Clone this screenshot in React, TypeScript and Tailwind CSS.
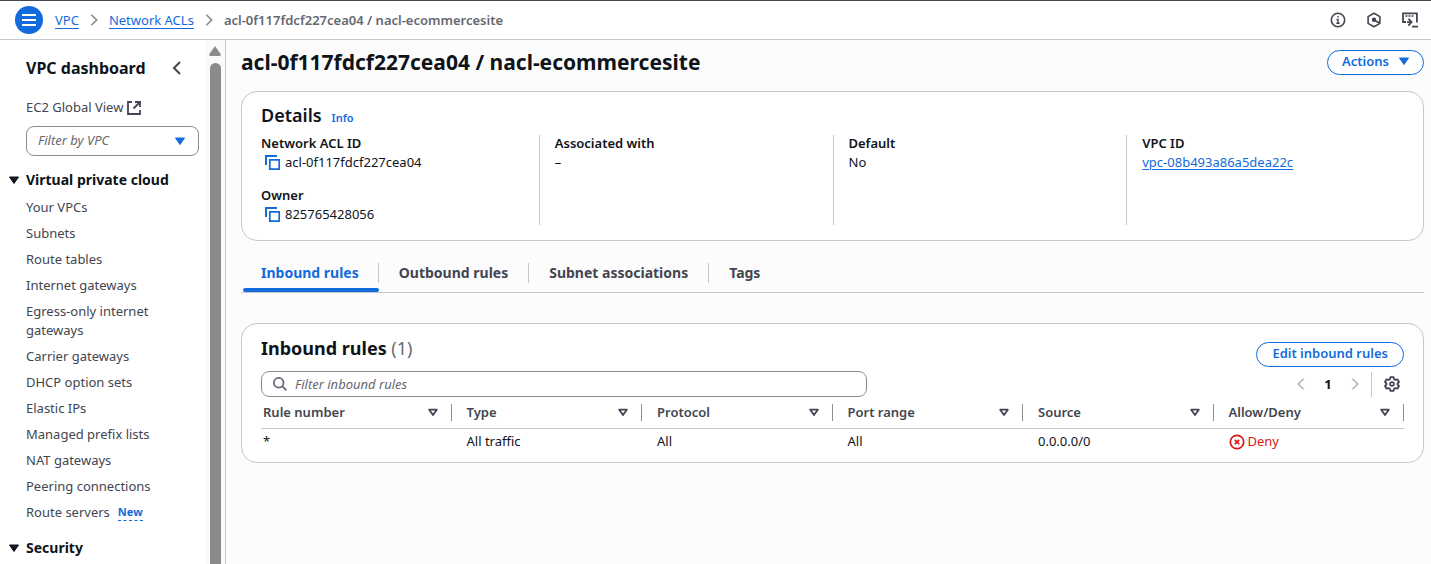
import React from "react";

const vpcLinks = [
  "Your VPCs",
  "Subnets",
  "Route tables",
  "Internet gateways",
  "Egress-only internet gateways",
  "Carrier gateways",
  "DHCP option sets",
  "Elastic IPs",
  "Managed prefix lists",
  "NAT gateways",
  "Peering connections",
];

const tabs = ["Inbound rules", "Outbound rules", "Subnet associations", "Tags"];

const columns = ["Rule number", "Type", "Protocol", "Port range", "Source", "Allow/Deny"];

function Chevron({ dir, className }: { dir: "left" | "right"; className: string }) {
  return (
    <svg viewBox="0 0 16 16" className={className} fill="none" stroke="currentColor" strokeWidth="2" aria-hidden="true">
      <path d={dir === "left" ? "M11 2 5 8l6 6" : "M5 2l6 6-6 6"} />
    </svg>
  );
}

function Caret({ className }: { className: string }) {
  return (
    <svg viewBox="0 0 10 8" className={className} fill="currentColor" stroke="currentColor" strokeLinejoin="round" aria-hidden="true">
      <path d="M.5 1h9L5 7.500z" />
    </svg>
  );
}

function CopyIcon() {
  return (
    <svg viewBox="0 0 16 16" className="size-4" fill="none" stroke="currentColor" aria-hidden="true">
      <path d="M1 10V1h11" strokeWidth="2" />
      <path d="M4.800 4.800h9.400v9.400H4.800z" strokeWidth="1.700" />
    </svg>
  );
}

function ExternalIcon() {
  return (
    <svg viewBox="0 0 16 16" className="size-4" fill="none" stroke="currentColor" strokeWidth="1.800" aria-hidden="true">
      <path d="M6 2H2v12h12v-4" />
      <path d="M9 2h5v5M14 2 7.500 8.500" />
    </svg>
  );
}

function InfoIcon() {
  return (
    <svg viewBox="0 0 16 16" className="size-4" fill="none" stroke="currentColor" aria-hidden="true">
      <circle cx="8" cy="8" r="6.700" strokeWidth="1.600" />
      <path d="M8 4v1.600M6.500 7.500H8v4M6.300 11.300h3.400" strokeWidth="1.400" />
    </svg>
  );
}

function HexIcon() {
  return (
    <svg viewBox="0 0 16 16" className="size-4" fill="none" stroke="currentColor" aria-hidden="true">
      <path d="M8 1.200 13.900 4.600v6.800L8 14.800 2.100 11.400V4.600z" strokeWidth="1.600" strokeLinejoin="round" />
      <path d="M8 8l5 2.800" strokeWidth="1.700" />
      <circle cx="8" cy="7.800" r="2.200" fill="currentColor" stroke="none" />
    </svg>
  );
}

function ShellIcon() {
  return (
    <svg viewBox="0 0 16 16" className="size-4" fill="none" stroke="currentColor" strokeWidth="1.800" aria-hidden="true">
      <path d="M4 10H1V1.400h13.900V10.500" />
      <path d="M3.500 4h2M6.500 4h2M9.500 4h2" strokeWidth="1.400" />
      <path d="M5 10.200h4M6.500 6.800 9.600 10l-3.300 3.600" />
      <path d="M10 14.600h6" />
    </svg>
  );
}

function GearIcon() {
  return (
    <svg viewBox="0 0 16 16" className="size-4" fill="none" stroke="currentColor" strokeWidth="1.800" strokeLinejoin="round" aria-hidden="true">
      <path d="M6.400 1.200h3.200l.5 2 1.300.7 2-.6 1.600 2.700-1.500 1.500v1l1.500 1.500-1.600 2.700-2-.6-1.300.7-.5 2H6.400l-.5-2-1.300-.7-2 .6L1 10l1.500-1.500v-1L1 6l1.600-2.700 2 .6 1.300-.7z" />
      <circle cx="8" cy="8" r="1.900" />
    </svg>
  );
}

function SectionHeading({ title }: { title: string }) {
  return (
    <button type="button" className="flex w-full items-center gap-[7px] pl-[9px] text-left text-[14px] leading-5 font-bold text-[#0f141a]">
      <Caret className="h-2 w-[10px]" />
      {title}
    </button>
  );
}

function Field({ label, children }: { label: string; children: React.ReactNode }) {
  return (
    <div>
      <dt className="font-semibold">{label}</dt>
      <dd>{children}</dd>
    </div>
  );
}

function Copyable({ value }: { value: string }) {
  return (
    <span className="flex items-center gap-1 pl-1">
      <button type="button" aria-label={`Copy ${value}`} className="text-[#126bdc]">
        <CopyIcon />
      </button>
      {value}
    </span>
  );
}

export default function App() {
  return (
    <div className="flex h-screen flex-col overflow-hidden border-t border-[#424650] bg-[#fcfcfd] font-['Noto_Sans',sans-serif] text-[13px] leading-[19px] text-[#0f141a]">
      <header className="flex h-[39px] shrink-0 items-center justify-between border-b border-[#c6c6cd] bg-white pr-[13px] pl-[15px]">
        <div className="flex items-center gap-3">
          <button type="button" aria-label="Open navigation" className="flex size-7 items-center justify-center rounded-full bg-[#126bdc] text-white">
            <svg viewBox="0 0 14 12" className="h-3 w-[14px]" stroke="currentColor" strokeWidth="2" aria-hidden="true">
              <path d="M0 1h14M0 6h14M0 11h14" />
            </svg>
          </button>
          <nav aria-label="Breadcrumb" className="flex items-center gap-2">
            <a href="#vpc" className="border-b border-[#126bdc] leading-4 text-[#126bdc]">VPC</a>
            <Chevron dir="right" className="size-[14px] text-[#8c8c94]" />
            <a href="#acls" className="border-b border-[#126bdc] leading-4 text-[#126bdc]">Network ACLs</a>
            <Chevron dir="right" className="size-[14px] text-[#8c8c94]" />
            <span className="font-semibold text-[#656871]">acl-0f117fdcf227cea04 / nacl-ecommercesite</span>
          </nav>
        </div>
        <div className="flex items-center gap-5 text-[#424650]">
          <button type="button" aria-label="Info"><InfoIcon /></button>
          <button type="button" aria-label="Diagnostics"><HexIcon /></button>
          <button type="button" aria-label="CloudShell"><ShellIcon /></button>
        </div>
      </header>

      <div className="flex min-h-0 flex-1">
        <aside className="flex w-[226px] shrink-0 overflow-hidden border-r border-[#c6c6cd] bg-white">
          <div className="min-w-0 flex-1 pt-[17px]">
            <div className="flex items-center justify-between pr-5 pl-[26px]">
              <h2 className="text-[16px] leading-[22px] font-bold">VPC dashboard</h2>
              <button type="button" aria-label="Close navigation" className="text-[#424650]">
                <Chevron dir="left" className="size-4" />
              </button>
            </div>
            <div className="mt-[19px] pl-[26px] text-[#424650]">
              <a href="#global" className="flex items-center gap-[3px]">
                EC2 Global View <ExternalIcon />
              </a>
            </div>
            <div className="relative mt-[9px] mr-[6px] ml-[26px]">
              <select aria-label="Filter by VPC" className="h-[30px] w-full appearance-none rounded-lg border border-[#8c8c94] bg-white pb-[2px] pl-[11px] text-[#656871] italic">
                <option>Filter by VPC</option>
              </select>
              <span className="pointer-events-none absolute inset-y-0 right-[14px] flex items-center text-[#126bdc]">
                <Caret className="h-2 w-[10px]" />
              </span>
            </div>
            <div className="mt-[14px]">
              <SectionHeading title="Virtual private cloud" />
              <ul className="mt-2 flex flex-col gap-[7px] pr-10 pl-[26px] text-[#424650]">
                {vpcLinks.map((l) => (
                  <li key={l}><a href="#nav" className="block">{l}</a></li>
                ))}
                <li className="flex items-center gap-2">
                  <a href="#nav">Route servers</a>
                  <button type="button" className="border-b border-dashed border-[#126bdc] text-[11px] leading-4 font-bold text-[#126bdc]">New</button>
                </li>
              </ul>
            </div>
            <div className="mt-4">
              <SectionHeading title="Security" />
            </div>
          </div>
          <div className="flex w-5 shrink-0 flex-col items-center bg-[#fafafa] pt-[6px] text-[#8b8b8b]" aria-hidden="true">
            <svg viewBox="0 0 12 10" className="h-[10px] w-3" fill="currentColor"><path d="M6 0l6 8.500-1 1.500H1L0 8.500z" /></svg>
            <div className="-mb-3 mt-[7px] w-[11px] flex-1 rounded-full bg-[#8b8b8b]" />
          </div>
        </aside>

        <main className="min-w-0 flex-1 overflow-hidden pt-2 pr-[7px] pl-[15px]">
          <div className="flex items-center justify-between">
            <h1 className="text-[21px] leading-7 font-bold">acl-0f117fdcf227cea04 / nacl-ecommercesite</h1>
            <button type="button" className="flex h-[25px] items-center gap-[10px] rounded-full border border-[#126bdc] bg-white px-[14px] pb-[2px] font-semibold text-[#126bdc]">
              Actions <Caret className="h-2 w-[10px]" />
            </button>
          </div>

          <section className="mt-[15px] rounded-2xl border border-[#c6c6cd] bg-white px-[19px] pt-[11px] pb-[15px]">
            <div className="flex items-baseline gap-[10px]">
              <h2 className="text-[18px] leading-6 font-semibold">Details</h2>
              <a href="#info" className="text-[11px] font-semibold text-[#126bdc]">Info</a>
            </div>
            <div className="mt-2 -ml-4 grid grid-cols-4 gap-x-4 leading-[19px]">
              <dl className="-mt-px mb-px flex flex-col gap-[14px] pl-4">
                <Field label="Network ACL ID"><Copyable value="acl-0f117fdcf227cea04" /></Field>
                <Field label="Owner"><Copyable value="825765428056" /></Field>
              </dl>
              <dl className="border-l border-[#c6c6cd] pl-[15px] *:-mt-px">
                <Field label="Associated with">–</Field>
              </dl>
              <dl className="border-l border-[#c6c6cd] pl-[15px] *:-mt-px">
                <Field label="Default">No</Field>
              </dl>
              <dl className="border-l border-[#c6c6cd] pl-[15px] *:-mt-px">
                <Field label="VPC ID">
                  <a href="#vpc-id" className="text-[#126bdc] underline underline-offset-2">vpc-08b493a86a5dea22c</a>
                </Field>
              </dl>
            </div>
          </section>

          <div role="tablist" className="mt-[11px] flex border-b border-[#c6c6cd] text-[14px] font-bold text-[#424650]">
            {tabs.map((t, i) => (
              <button
                key={t}
                type="button"
                role="tab"
                aria-selected={i === 0}
                className={i === 0 ? "flex flex-col pl-[2px] text-[#126bdc]" : "flex flex-col"}
              >
                <span className={i === 0 ? "mt-[11px] border-r border-[#c6c6cd] pr-[19px] pl-[18px] leading-5" : i === 3 ? "mt-[11px] px-5 leading-5" : "mt-[11px] border-r border-[#c6c6cd] px-5 leading-5"}>{t}</span>
                <span className={i === 0 ? "mt-[5px] h-1 w-full rounded-sm bg-[#126bdc]" : "mt-[5px] h-1 w-full"} />
              </button>
            ))}
          </div>

          <section className="mt-[30px] rounded-2xl border border-[#c6c6cd] bg-white px-[19px] pt-3 pb-[7px]">
            <div className="flex items-start justify-between">
              <h2 className="text-[18px] leading-6 font-bold">
                Inbound rules <span className="font-normal text-[#656871]">(1)</span>
              </h2>
              <button type="button" className="mt-[6px] flex h-[25px] items-center rounded-full border border-[#126bdc] bg-white px-[15px] pb-[2px] font-semibold text-[#126bdc]">
                Edit inbound rules
              </button>
            </div>
            <div className="mt-1 flex items-center justify-between">
              <label className="flex h-[26px] w-[53%] items-center gap-2 rounded-lg border border-[#8c8c94] bg-white pl-[11px]">
                <svg viewBox="0 0 16 16" className="size-[14px] text-[#656871]" fill="none" stroke="currentColor" strokeWidth="2" aria-hidden="true">
                  <circle cx="6.500" cy="6.500" r="5.500" />
                  <path d="M10.500 10.500 15.300 15.300" />
                </svg>
                <input type="text" aria-label="Filter inbound rules" placeholder="Filter inbound rules" className="min-w-0 flex-1 bg-transparent italic outline-none placeholder:text-[#656871]" />
              </label>
              <div className="flex items-center">
                <button type="button" aria-label="Previous page" className="text-[#b4b4bb]"><Chevron dir="left" className="size-[14px]" /></button>
                <button type="button" className="w-10 font-bold">1</button>
                <button type="button" aria-label="Next page" className="text-[#b4b4bb]"><Chevron dir="right" className="size-[14px]" /></button>
                <button type="button" aria-label="Preferences" className="ml-[9px] flex h-[25px] items-center border-l border-[#c6c6cd] pr-1 pl-3 text-[#424650]"><GearIcon /></button>
              </div>
            </div>
            <table className="w-full table-fixed border-collapse text-left">
              <thead>
                <tr className="border-b border-[#c6c6cd] text-[#424650]">
                  {columns.map((c, i) => (
                    <th key={c} scope="col" className={i === 0 ? "h-[31px] p-0 pl-[2px] font-semibold" : "h-[31px] p-0 pl-[15px] font-semibold"}>
                      <div className="flex items-center">
                        <span className="flex-1">{c}</span>
                        <svg viewBox="0 0 10 8" className="mr-[13px] h-2 w-[10px]" fill="none" stroke="currentColor" strokeWidth="1.800" strokeLinejoin="round" aria-hidden="true">
                          <path d="M1.200 1.700h7.600L5 7.100z" />
                        </svg>
                        <span className="h-[17px] w-px bg-[#8c8c94]" />
                      </div>
                    </th>
                  ))}
                </tr>
              </thead>
              <tbody>
                <tr>
                  <td className="h-[27px] p-0 pl-[2px]">*</td>
                  <td className="p-0 pl-[15px]">All traffic</td>
                  <td className="p-0 pl-[15px]">All</td>
                  <td className="p-0 pl-[15px]">All</td>
                  <td className="p-0 pl-[15px]">0.0.0.0/0</td>
                  <td className="p-0 pl-[15px]">
                    <span className="flex items-center gap-[3px] text-[#d91515]">
                      <svg viewBox="0 0 16 16" className="size-4" fill="none" stroke="currentColor" strokeWidth="1.700" aria-hidden="true">
                        <circle cx="8" cy="8" r="6.700" />
                        <path d="M5.800 5.800l4.400 4.400M10.200 5.800l-4.400 4.400" />
                      </svg>
                      Deny
                    </span>
                  </td>
                </tr>
              </tbody>
            </table>
          </section>
        </main>
      </div>
    </div>
  );
}
